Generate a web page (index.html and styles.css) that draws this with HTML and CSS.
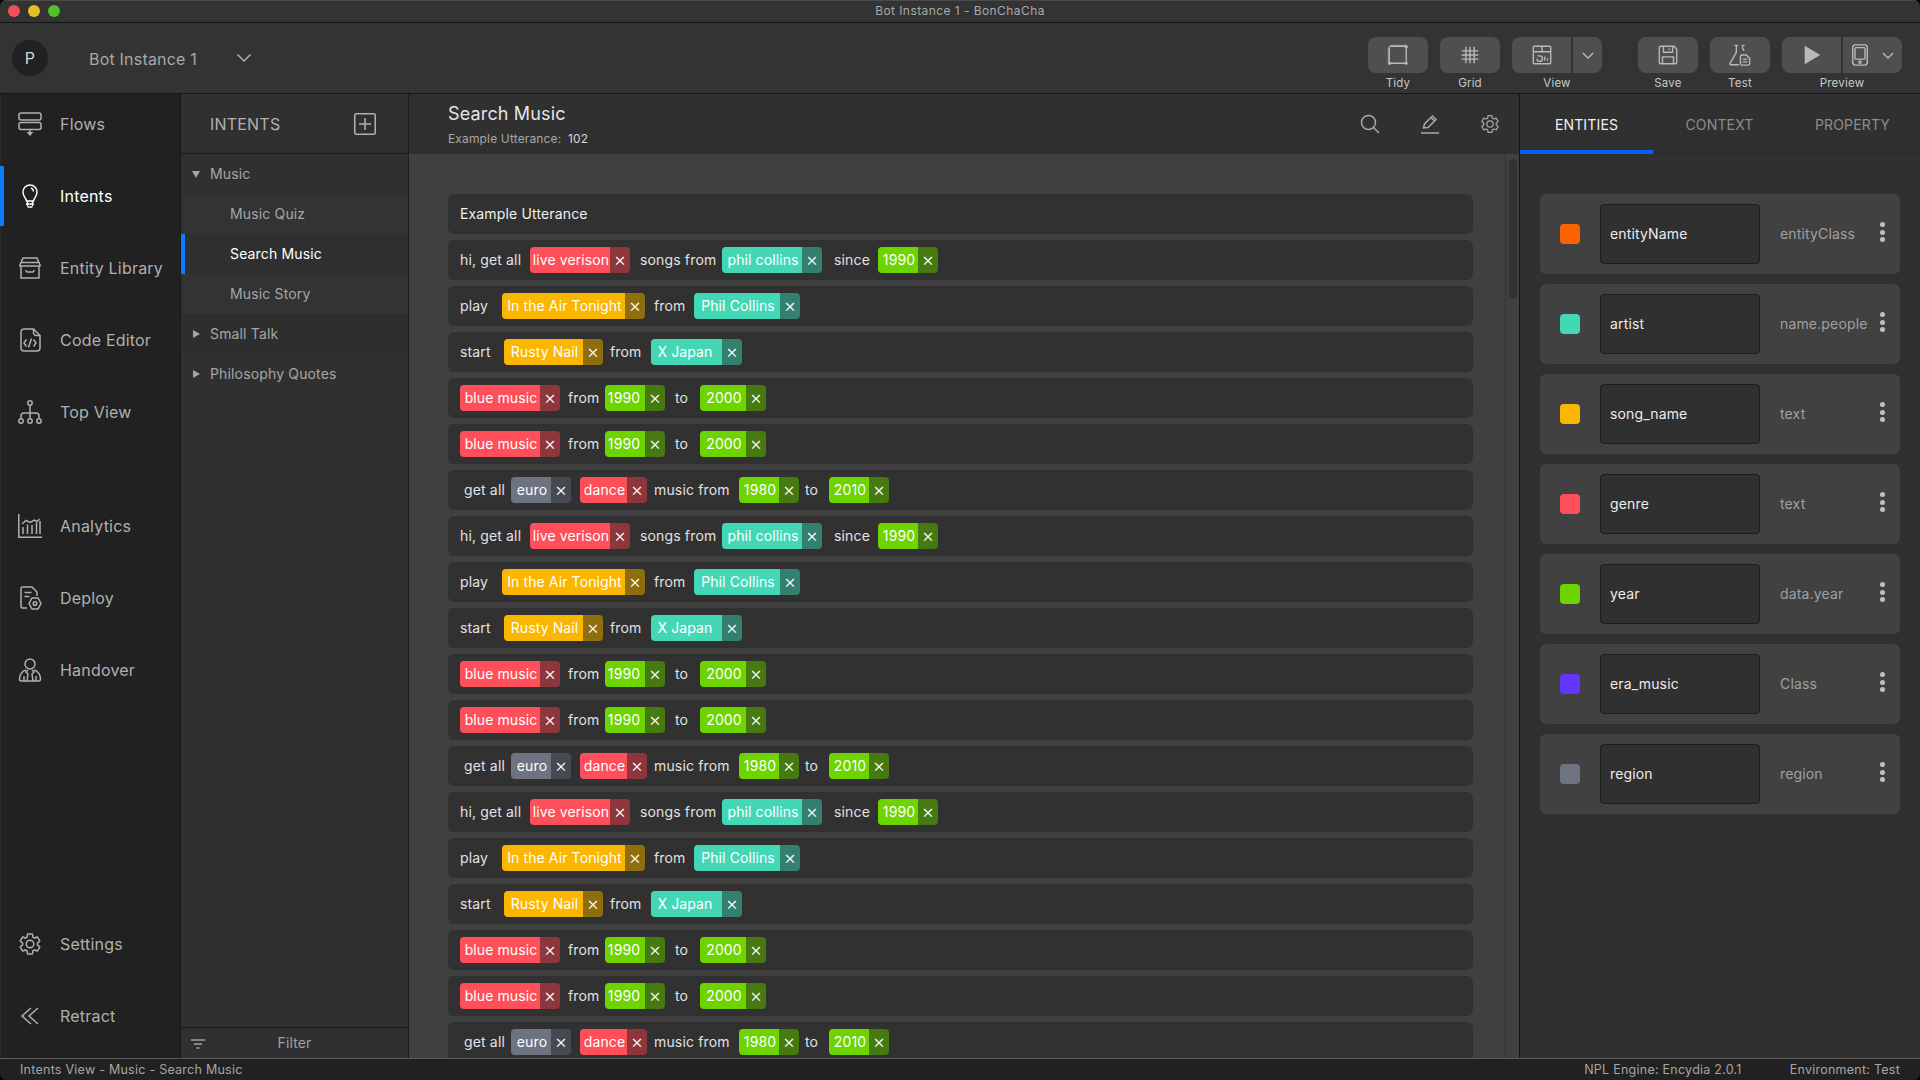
FILE: index.html
```html
<!DOCTYPE html>
<html lang="en">
<head>
  <meta charset="UTF-8">
  <title>Bot Instance 1 - BonChaCha</title>
  <link rel="stylesheet" href="styles.css">
</head>
<body>
  <div class="app">
    <div class="titlebar">
      <div class="lights"><i class="light red"></i><i class="light yellow"></i><i class="light green"></i></div>
      <span>Bot Instance 1 - BonChaCha</span>
    </div>

    <header class="toolbar">
      <div class="avatar">P</div>
      <div class="bot-name">Bot Instance 1</div>
      <svg class="bot-chevron" viewBox="0 0 16 10"><path d="M1.5 1.5 8 8l6.5-6.5"/></svg>
      <div class="tools">
        <div class="tool">
          <div class="tool-btns"><button class="btn">
            <svg class="ico" viewBox="0 0 24 24"><path d="M3 2.500h18.500M2.500 3v18.500M21 3v18.500M3 21h18"/><path d="M4 1.500h18M1.500 4v18" opacity=".5"/><circle cx="3" cy="21" r="1"/><circle cx="21" cy="21" r="1"/><circle cx="21" cy="3" r="1"/></svg>
          </button></div>
          <span class="tool-name">Tidy</span>
        </div>
        <div class="tool">
          <div class="tool-btns"><button class="btn">
            <svg class="ico" viewBox="0 0 24 24"><path d="M7.500 3v18M12 3v18M16.500 3v18M3 7.500h18M3 12h18M3 16.500h18"/></svg>
          </button></div>
          <span class="tool-name">Grid</span>
        </div>
        <div class="tool">
          <div class="tool-btns">
            <button class="btn btn-l">
              <svg class="ico" viewBox="0 0 24 24"><rect x="2.500" y="2.500" width="19" height="19" rx="1"/><path d="M2.500 8.500h19M12 2.500v6M2.500 8.500M7 13h3v0a3 3 0 1 1-3.500 3M15 13.500V18M18 15.500V18"/></svg>
            </button>
            <button class="btn btn-r">
              <svg class="chev" viewBox="0 0 14 8"><path d="M1 1l6 6 6-6"/></svg>
            </button>
          </div>
          <span class="tool-name">View</span>
        </div>
        <div class="tool tool-gap">
          <div class="tool-btns"><button class="btn">
            <svg class="ico" viewBox="0 0 24 24"><path d="M4 2.500h14.500l3 3V20a1.500 1.500 0 0 1-1.500 1.500H4A1.500 1.500 0 0 1 2.500 20V4A1.500 1.500 0 0 1 4 2.500z"/><path d="M7 2.500v6.500h10V2.500M13.500 5v1.500M6 21.500V14h12v7.500"/></svg>
          </button></div>
          <span class="tool-name">Save</span>
        </div>
        <div class="tool">
          <div class="tool-btns"><button class="btn">
            <svg class="ico" viewBox="0 0 24 24"><path d="M6 1.500h4M8 1.500v7.500L1 21.500a.8.8 0 0 0 .7 1.200H11M14 1.500h3M15 1.500c-1 2 0 4 1.500 6"/><path d="M14 12h5l3.500 3.500v6a1.500 1.500 0 0 1-1.500 1.500h-7a1.500 1.500 0 0 1-1.500-1.500V13.500A1.500 1.500 0 0 1 14 12zM15 16.500h5M15 19.500h5"/></svg>
          </button></div>
          <span class="tool-name">Test</span>
        </div>
        <div class="tool">
          <div class="tool-btns">
            <button class="btn btn-l">
              <svg class="ico" viewBox="0 0 24 24"><path class="solid" d="M4 2l17 10L4 22z"/></svg>
            </button>
            <button class="btn btn-r wide">
              <svg class="ico" viewBox="0 0 24 24"><rect x="4" y="1" width="16" height="22" rx="3"/><rect x="6.500" y="4" width="11" height="12.500" rx="1"/><circle cx="12" cy="19.700" r="1.300"/></svg>
              <svg class="chev" viewBox="0 0 14 8"><path d="M1 1l6 6 6-6"/></svg>
            </button>
          </div>
          <span class="tool-name">Preview</span>
        </div>
      </div>
    </header>

    <div class="workspace">
      <nav class="sidebar">
        <div class="nav-group">
          <a class="nav-item">
            <svg class="nav-ico" viewBox="0 0 24 24"><rect x="1" y="1" width="22" height="7" rx="2"/><rect x="1" y="10.500" width="22" height="7" rx="2"/><path d="M12 18v3"/><path class="solid" d="M8.500 20h7L12 24z"/></svg>
            Flows
          </a>
          <a class="nav-item active">
            <svg class="nav-ico" viewBox="0 0 24 24"><path d="M8.500 17c0-2.500-3.500-4-3.500-9a7 7 0 0 1 14 0c0 5-3.500 6.500-3.500 9z"/><path d="M13 4a4 4 0 0 1 2.500 3.500M8 20h8M9.500 23h5M9.500 17v5M14.500 17v5"/></svg>
            Intents
          </a>
          <a class="nav-item">
            <svg class="nav-ico" viewBox="0 0 24 24"><path d="M5 2h14l3 7v1H2V9zM2.500 6.500h19M3 10v12h18V10M8 14v.5c0 1 .7 1.500 1.500 1.500h5c.8 0 1.500-.5 1.500-1.500V14"/></svg>
            Entity Library
          </a>
          <a class="nav-item">
            <svg class="nav-ico" viewBox="0 0 24 24"><path d="M6 1h9.500L22 7.500V20a3 3 0 0 1-3 3H6a3 3 0 0 1-3-3V4a3 3 0 0 1 3-3z"/><path d="M15.500 1v3a3 3 0 0 0 3 3.500H22M8.500 11.500 6 15l2.500 3.500M15.500 11.500 18 15l-2.500 3.500M13.500 10.500l-3 9"/></svg>
            Code Editor
          </a>
          <a class="nav-item">
            <svg class="nav-ico" viewBox="0 0 24 24"><circle cx="12" cy="3" r="2.200"/><circle cx="3" cy="21" r="2.200"/><circle cx="12" cy="21" r="2.200"/><circle cx="21" cy="21" r="2.200"/><path d="M12 5.200v13.600M3 18.800V16a3 3 0 0 1 3-3h12a3 3 0 0 1 3 3v2.800"/></svg>
            Top View
          </a>
        </div>
        <div class="nav-group nav-gap">
          <a class="nav-item">
            <svg class="nav-ico" viewBox="0 0 24 24"><path d="M.800 0v23.200H24M5 20v-7M9.500 20v-9.500M14 20v-9M18.500 20v-11.500M22 20V7" /><path d="M4 10l4-3.500 4 2 4.500-2.500 2.500 1.500 2.500-2.500" /></svg>
            Analytics
          </a>
          <a class="nav-item">
            <svg class="nav-ico" viewBox="0 0 24 24"><path d="M9 22H4.500A1.500 1.500 0 0 1 3 20.500v-18A1.500 1.500 0 0 1 4.500 1H14l5 5v4M6.500 6.500h7M6.500 10.500h5"/><path d="M14 12h6l3 5.500-3 5.500h-6l-3-5.500z"/><circle cx="17" cy="17.500" r="1.800"/></svg>
            Deploy
          </a>
          <a class="nav-item">
            <svg class="nav-ico" viewBox="0 0 24 24"><circle cx="12" cy="6" r="5"/><path d="M8 12C4 13 1.500 17 1.500 21a2 2 0 0 0 2 2h17a2 2 0 0 0 2-2c0-4-2.500-8-6.500-9"/><path d="M10 12l-2 2 2 2-1 7M14 12l2 2-2 2 1 7M6 18v5M18 18v5"/></svg>
            Handover
          </a>
        </div>
        <div class="nav-group nav-bottom">
          <a class="nav-item">
            <svg class="nav-ico" viewBox="0 0 24 24"><path d="M19.430 12.980c.04-.32.07-.64.07-.98s-.03-.66-.07-.98l2.110-1.650c.19-.15.24-.42.12-.64l-2-3.460c-.12-.22-.39-.3-.61-.22l-2.490 1c-.52-.4-1.080-.73-1.690-.98l-.38-2.650C14.460 2.180 14.250 2 14 2h-4c-.25 0-.46.18-.49.42l-.38 2.650c-.61.25-1.170.59-1.690.98l-2.490-1c-.23-.09-.49 0-.61.22l-2 3.460c-.13.22-.07.49.12.64l2.110 1.650c-.04.32-.07.65-.07.98s.03.66.07.98l-2.110 1.650c-.19.15-.24.42-.12.64l2 3.460c.12.22.39.3.61.22l2.490-1c.52.4 1.080.73 1.690.98l.38 2.650c.03.24.24.42.49.42h4c.25 0 .46-.18.49-.42l.38-2.650c.61-.25 1.170-.59 1.690-.98l2.490 1c.23.09.49 0 .61-.22l2-3.460c.12-.22.07-.49-.12-.64l-2.110-1.650z"/><circle cx="12" cy="12" r="3.800"/></svg>
            Settings
          </a>
          <a class="nav-item">
            <svg class="nav-ico" viewBox="0 0 24 24"><path d="M13 4 4 12l9 8M20 4l-9 8 9 8"/></svg>
            Retract
          </a>
        </div>
      </nav>

      <aside class="intents">
        <div class="intents-head">
          <span>INTENTS</span>
          <svg class="add-ico" viewBox="0 0 22 22"><rect x=".750" y=".750" width="20.500" height="20.500" rx="1.500"/><path d="M11 5v12M5 11h12"/></svg>
        </div>
        <ul class="tree">
          <li class="tree-row"><i class="arrow down"></i>Music</li>
          <li class="tree-row child light-row">Music Quiz</li>
          <li class="tree-row child selected">Search Music</li>
          <li class="tree-row child light-row">Music Story</li>
          <li class="tree-row"><i class="arrow"></i>Small Talk</li>
          <li class="tree-row light-row"><i class="arrow"></i>Philosophy Quotes</li>
        </ul>
        <div class="filter">
          <svg class="filter-ico" viewBox="0 0 14 10"><path d="M0 1h14M3 5h8M5.500 9h3"/></svg>
          <span>Filter</span>
        </div>
      </aside>

      <main class="main">
        <div class="main-head">
          <div>
            <h1>Search Music</h1>
            <p>Example Utterance: <b>102</b></p>
          </div>
          <div class="head-icons">
            <svg viewBox="0 0 20 20"><circle cx="8.500" cy="8.500" r="7"/><path d="M13.500 13.500l5.500 5.500"/></svg>
            <svg viewBox="0 0 20 20"><path d="M3.500 14l1-4L12.500 2l3.500 3.500-8 8zM11 3.500l3.500 3.500M1 19h18"/></svg>
            <svg viewBox="0 0 24 24"><path d="M19.430 12.980c.04-.32.07-.64.07-.98s-.03-.66-.07-.98l2.110-1.650c.19-.15.24-.42.12-.64l-2-3.460c-.12-.22-.39-.3-.61-.22l-2.490 1c-.52-.4-1.080-.73-1.690-.98l-.38-2.650C14.460 2.180 14.250 2 14 2h-4c-.25 0-.46.18-.49.42l-.38 2.650c-.61.25-1.170.59-1.690.98l-2.490-1c-.23-.09-.49 0-.61.22l-2 3.460c-.13.22-.07.49.12.64l2.110 1.650c-.04.32-.07.65-.07.98s.03.66.07.98l-2.110 1.650c-.19.15-.24.42-.12.64l2 3.460c.12.22.39.3.61.22l2.490-1c.52.4 1.080.73 1.690.98l.38 2.650c.03.24.24.42.49.42h4c.25 0 .46-.18.49-.42l.38-2.650c.61-.25 1.170-.59 1.690-.98l2.490 1c.23.09.49 0 .61-.22l2-3.460c.12-.22.07-.49-.12-.64l-2.110-1.650z"/><circle cx="12" cy="12" r="3.800"/></svg>
          </div>
        </div>
        <div class="main-body">
          <div class="list">
            <div class="row row-title">Example Utterance</div>

            <div class="row hi"><span>hi, get all</span><span class="tag red w100"><b>live verison</b><i>×</i></span><span>songs from</span><span class="tag teal w100"><b>phil collins</b><i>×</i></span><span>since</span><span class="tag lime w60"><b>1990</b><i>×</i></span></div>
            <div class="row play"><span>play</span><span class="tag amber w143"><b>In the Air Tonight</b><i>×</i></span><span>from</span><span class="tag teal w106"><b>Phil Collins</b><i>×</i></span></div>
            <div class="row start"><span>start</span><span class="tag amber w99"><b>Rusty Nail</b><i>×</i></span><span>from</span><span class="tag teal w91"><b>X Japan</b><i>×</i></span></div>
            <div class="row blue"><span class="tag red w100"><b>blue music</b><i>×</i></span><span>from</span><span class="tag lime w60"><b>1990</b><i>×</i></span><span>to</span><span class="tag lime w66"><b>2000</b><i>×</i></span></div>
            <div class="row blue"><span class="tag red w100"><b>blue music</b><i>×</i></span><span>from</span><span class="tag lime w60"><b>1990</b><i>×</i></span><span>to</span><span class="tag lime w66"><b>2000</b><i>×</i></span></div>
            <div class="row euro"><span>get all</span><span class="tag gray w60"><b>euro</b><i>×</i></span><span class="tag red w67"><b>dance</b><i>×</i></span><span>music from</span><span class="tag lime w60"><b>1980</b><i>×</i></span><span>to</span><span class="tag lime w60"><b>2010</b><i>×</i></span></div>

            <div class="row hi"><span>hi, get all</span><span class="tag red w100"><b>live verison</b><i>×</i></span><span>songs from</span><span class="tag teal w100"><b>phil collins</b><i>×</i></span><span>since</span><span class="tag lime w60"><b>1990</b><i>×</i></span></div>
            <div class="row play"><span>play</span><span class="tag amber w143"><b>In the Air Tonight</b><i>×</i></span><span>from</span><span class="tag teal w106"><b>Phil Collins</b><i>×</i></span></div>
            <div class="row start"><span>start</span><span class="tag amber w99"><b>Rusty Nail</b><i>×</i></span><span>from</span><span class="tag teal w91"><b>X Japan</b><i>×</i></span></div>
            <div class="row blue"><span class="tag red w100"><b>blue music</b><i>×</i></span><span>from</span><span class="tag lime w60"><b>1990</b><i>×</i></span><span>to</span><span class="tag lime w66"><b>2000</b><i>×</i></span></div>
            <div class="row blue"><span class="tag red w100"><b>blue music</b><i>×</i></span><span>from</span><span class="tag lime w60"><b>1990</b><i>×</i></span><span>to</span><span class="tag lime w66"><b>2000</b><i>×</i></span></div>
            <div class="row euro"><span>get all</span><span class="tag gray w60"><b>euro</b><i>×</i></span><span class="tag red w67"><b>dance</b><i>×</i></span><span>music from</span><span class="tag lime w60"><b>1980</b><i>×</i></span><span>to</span><span class="tag lime w60"><b>2010</b><i>×</i></span></div>

            <div class="row hi"><span>hi, get all</span><span class="tag red w100"><b>live verison</b><i>×</i></span><span>songs from</span><span class="tag teal w100"><b>phil collins</b><i>×</i></span><span>since</span><span class="tag lime w60"><b>1990</b><i>×</i></span></div>
            <div class="row play"><span>play</span><span class="tag amber w143"><b>In the Air Tonight</b><i>×</i></span><span>from</span><span class="tag teal w106"><b>Phil Collins</b><i>×</i></span></div>
            <div class="row start"><span>start</span><span class="tag amber w99"><b>Rusty Nail</b><i>×</i></span><span>from</span><span class="tag teal w91"><b>X Japan</b><i>×</i></span></div>
            <div class="row blue"><span class="tag red w100"><b>blue music</b><i>×</i></span><span>from</span><span class="tag lime w60"><b>1990</b><i>×</i></span><span>to</span><span class="tag lime w66"><b>2000</b><i>×</i></span></div>
            <div class="row blue"><span class="tag red w100"><b>blue music</b><i>×</i></span><span>from</span><span class="tag lime w60"><b>1990</b><i>×</i></span><span>to</span><span class="tag lime w66"><b>2000</b><i>×</i></span></div>
            <div class="row euro"><span>get all</span><span class="tag gray w60"><b>euro</b><i>×</i></span><span class="tag red w67"><b>dance</b><i>×</i></span><span>music from</span><span class="tag lime w60"><b>1980</b><i>×</i></span><span>to</span><span class="tag lime w60"><b>2010</b><i>×</i></span></div>
          </div>
          <div class="scroll"><div class="thumb"></div></div>
        </div>
      </main>

      <section class="panel">
        <div class="tabs">
          <div class="tab on">ENTITIES</div>
          <div class="tab">CONTEXT</div>
          <div class="tab">PROPERTY</div>
        </div>
        <div class="entities">
          <div class="entity"><i class="swatch c-orange"></i><div class="entity-name">entityName</div><span class="entity-class">entityClass</span><div class="dots"><i></i><i></i><i></i></div></div>
          <div class="entity"><i class="swatch c-teal"></i><div class="entity-name">artist</div><span class="entity-class">name.people</span><div class="dots"><i></i><i></i><i></i></div></div>
          <div class="entity"><i class="swatch c-amber"></i><div class="entity-name">song_name</div><span class="entity-class">text</span><div class="dots"><i></i><i></i><i></i></div></div>
          <div class="entity"><i class="swatch c-red"></i><div class="entity-name">genre</div><span class="entity-class">text</span><div class="dots"><i></i><i></i><i></i></div></div>
          <div class="entity"><i class="swatch c-lime"></i><div class="entity-name">year</div><span class="entity-class">data.year</span><div class="dots"><i></i><i></i><i></i></div></div>
          <div class="entity"><i class="swatch c-purple"></i><div class="entity-name">era_music</div><span class="entity-class">Class</span><div class="dots"><i></i><i></i><i></i></div></div>
          <div class="entity"><i class="swatch c-gray"></i><div class="entity-name">region</div><span class="entity-class">region</span><div class="dots"><i></i><i></i><i></i></div></div>
        </div>
      </section>
    </div>

    <footer class="statusbar">
      <span>Intents View - Music - Search Music</span>
      <span class="status-right"><span>NPL Engine: Encydia 2.0.1</span><span>Environment: Test</span></span>
    </footer>
  </div>
</body>
</html>
```

FILE: styles.css
```css
* {
  box-sizing: border-box;
}

body {
  margin: 0;
  background: #000;
  font-family: Inter, "Noto Sans", sans-serif;
  font-size: 14px;
  letter-spacing: 0.15px;
  color: #b0b0b0;
  overflow: hidden;
}

svg {
  display: block;
  fill: none;
  stroke: currentColor;
  stroke-width: 1.5;
}

svg .solid {
  fill: currentColor;
  stroke: none;
}

.app {
  width: 1920px;
  height: 1080px;
  display: flex;
  flex-direction: column;
  border-radius: 6px;
  overflow: hidden;
}

/* title bar */
.titlebar {
  position: relative;
  height: 23px;
  flex: none;
  background: #333;
  border-top: 1px solid #4a4a4a;
  border-bottom: 1px solid #141414;
  display: flex;
  align-items: center;
  justify-content: center;
  padding-bottom: 2px;
  font-size: 12px;
  letter-spacing: 0.43px;
  color: #a9a9a9;
}

.lights {
  position: absolute;
  left: 8px;
  top: 4px;
  display: flex;
  gap: 8px;
}

.light {
  width: 12px;
  height: 12px;
  border-radius: 50%;
}

.light.red { background: #f25056; }
.light.yellow { background: #e5bf28; }
.light.green { background: #4fc12e; }

/* toolbar */
.toolbar {
  height: 71px;
  flex: none;
  background: #333;
  border-bottom: 1px solid #161616;
  display: flex;
  align-items: center;
  padding: 0 18px 0 12px;
}

.avatar {
  width: 36px;
  height: 36px;
  border-radius: 50%;
  background: #212121;
  color: #d6d6d6;
  font-size: 16px;
  display: flex;
  align-items: center;
  justify-content: center;
}

.bot-name {
  margin-left: 41px;
  padding-top: 2px;
  font-size: 16px;
  letter-spacing: 0.2px;
  color: #a8a8a8;
}

.bot-chevron {
  width: 16px;
  height: 10px;
  margin-left: 39px;
  color: #b0b0b0;
}

.tools {
  margin-left: auto;
  align-self: flex-start;
  padding-top: 14px;
  display: flex;
  gap: 12px;
}

.tool {
  display: flex;
  flex-direction: column;
  align-items: center;
}

.tool-gap {
  margin-left: 24px;
}

.tool-btns {
  display: flex;
  gap: 2px;
}

.btn {
  width: 60px;
  height: 36px;
  border: 0;
  padding: 0;
  border-radius: 8px;
  background: #4f4f4f;
  color: #b9b9b9;
  display: flex;
  align-items: center;
  justify-content: center;
}

.btn-l {
  width: 59px;
  border-radius: 8px 0 0 8px;
}

.btn-r {
  width: 29px;
  border-radius: 0 8px 8px 0;
}

.btn-r.wide {
  width: 59px;
  gap: 11px;
  padding-right: 3px;
}

.ico {
  width: 22px;
  height: 22px;
}

.chev {
  width: 12px;
  height: 7px;
}

.tool-name {
  margin-top: 3px;
  font-size: 11.5px;
  line-height: 14px;
  letter-spacing: 0.2px;
  color: #c8c8c8;
}

/* main area */
.workspace {
  flex: 1;
  min-height: 0;
  display: flex;
}

.sidebar {
  width: 181px;
  flex: none;
  background: #212121;
  border-left: 1px solid #2e2e2e;
  border-right: 1px solid #181818;
  display: flex;
  flex-direction: column;
  padding-bottom: 12px;
}

.nav-group {
  display: flex;
  flex-direction: column;
  gap: 12px;
}

.nav-gap {
  margin-top: 54px;
}

.nav-bottom {
  margin-top: auto;
}

.nav-item {
  height: 60px;
  display: flex;
  align-items: center;
  gap: 18px;
  padding-left: 17px;
  font-size: 16px;
  letter-spacing: 0.2px;
  color: #b0b0b0;
}

.nav-item.active {
  color: #fff;
  box-shadow: inset 4px 0 0 #0a7cff;
  margin-left: -1px;
  padding-left: 18px;
}

.nav-ico {
  width: 24px;
  height: 24px;
  flex: none;
}

.intents {
  width: 228px;
  flex: none;
  background: #303030;
  border-right: 1px solid #1c1c1c;
  display: flex;
  flex-direction: column;
}

.intents-head {
  height: 60px;
  flex: none;
  border-bottom: 1px solid #1c1c1c;
  display: flex;
  align-items: center;
  justify-content: space-between;
  padding: 0 32px 0 29px;
  font-size: 16px;
  letter-spacing: 0.2px;
  color: #b0b0b0;
}

.add-ico {
  width: 22px;
  height: 22px;
}

.tree {
  list-style: none;
  margin: 0;
  padding: 0;
  flex: 1;
}

.tree-row {
  position: relative;
  height: 40px;
  display: flex;
  align-items: center;
  padding-left: 29px;
  padding-bottom: 2px;
  color: #a6a6a6;
}

.tree-row.child {
  padding-left: 49px;
}

.tree-row.light-row {
  background: #333;
}

.tree-row.selected {
  color: #fff;
  background: #2f2f2f;
  box-shadow: inset 4px 0 0 #0a7cff;
}

.tree-row:nth-child(5) {
  background: #2e2e2e;
}

.tree-row:nth-child(6) {
  background: transparent;
}

.arrow {
  position: absolute;
  left: 12px;
  top: 16px;
  width: 0;
  height: 0;
  border-style: solid;
  border-width: 4px 0 4px 7px;
  border-color: transparent transparent transparent #a6a6a6;
}

.arrow.down {
  left: 11px;
  top: 17px;
  border-width: 7px 4px 0 4px;
  border-color: #a6a6a6 transparent transparent transparent;
}

.filter {
  height: 31px;
  flex: none;
  border-top: 1px solid #1c1c1c;
  display: flex;
  align-items: center;
  justify-content: center;
  position: relative;
  padding-bottom: 1px;
  color: #a0a0a0;
}

.filter-ico {
  position: absolute;
  left: 10px;
  top: 11px;
  width: 14px;
  height: 10px;
}

.main {
  flex: 1;
  min-width: 0;
  border-right: 1px solid #141414;
  display: flex;
  flex-direction: column;
}

.main-head {
  height: 60px;
  flex: none;
  background: #303030;
  display: flex;
  align-items: center;
  justify-content: space-between;
  padding: 0 19px 0 39px;
}

.main-head h1 {
  margin: 0;
  font-size: 18px;
  font-weight: 400;
  line-height: 24px;
  color: #e6e6e6;
}

.main-head p {
  margin: 5px 0 0;
  font-size: 12px;
  line-height: 16px;
  color: #a6a6a6;
}

.main-head b {
  font-weight: 400;
  color: #d6d6d6;
  margin-left: 3px;
}

.head-icons {
  display: flex;
  gap: 40px;
  color: #a8a8a8;
}

.head-icons svg {
  width: 20px;
  height: 20px;
}

.main-body {
  flex: 1;
  min-height: 0;
  background: #404040;
  display: flex;
}

.list {
  flex: 1;
  min-width: 0;
  padding: 40px 32px 0 39px;
  overflow: hidden;
}

.row {
  height: 40px;
  margin-bottom: 6px;
  border-radius: 6px;
  background: #313131;
  padding-left: 12px;
  color: #e2e2e2;
  display: grid;
  align-items: center;
}

.row > span:not(.tag) {
  padding-bottom: 2px;
}

.row-title {
  display: flex;
  padding-bottom: 2px;
  color: #f0f0f0;
}

.hi { grid-template-columns: 70px 110px 82px 112px 44px 60px; }
.play { grid-template-columns: 42px 152px 40px 106px; }
.start { grid-template-columns: 44px 106px 41px 91px; }
.blue { grid-template-columns: 108px 37px 70px 25px 66px; }
.euro {
  padding-left: 16px;
  grid-template-columns: 47px 69px 74px 85px 66px 24px 60px;
}

.tag {
  height: 26px;
  display: flex;
  border-radius: 4px;
  overflow: hidden;
  color: #fff;
  letter-spacing: 0.1px;
}

.tag b {
  flex: 1;
  padding-left: 2px;
  font-weight: 400;
  line-height: 26px;
  text-align: center;
  white-space: nowrap;
  background: var(--tag);
}

.tag i {
  flex: none;
  width: 20px;
  font-style: normal;
  font-weight: 300;
  font-size: 19px;
  line-height: 25px;
  text-align: center;
  letter-spacing: 0;
  background: var(--tag-dark);
}

.w91 b {
  padding-left: 0;
  padding-right: 3px;
}

.blue .w60 b {
  padding-left: 0;
  padding-right: 2px;
}

.red { --tag: #ff4f5a; --tag-dark: #8d373d; }
.teal { --tag: #44d7b6; --tag-dark: #33806e; }
.amber { --tag: #fab600; --tag-dark: #8e6e0f; }
.lime { --tag: #6dd400; --tag-dark: #467a10; }
.gray { --tag: #6d7380; --tag-dark: #454950; }

.w60 { width: 60px; }
.w66 { width: 66px; }
.w67 { width: 67px; }
.w91 { width: 91px; }
.w99 { width: 99px; }
.w100 { width: 100px; }
.w106 { width: 106px; }
.w143 { width: 143px; }

.scroll {
  width: 14px;
  flex: none;
  border-left: 1px solid #353535;
  padding: 5px 3px 0;
}

.thumb {
  width: 8px;
  height: 140px;
  border-radius: 4px;
  background: #333;
}

.panel {
  width: 400px;
  flex: none;
  background: #303030;
  display: flex;
  flex-direction: column;
}

.tabs {
  height: 60px;
  flex: none;
  display: flex;
  border-bottom: 1px solid #262626;
}

.tab {
  width: 133px;
  display: flex;
  align-items: center;
  justify-content: center;
  color: #8c8c8c;
  border-bottom: 4px solid transparent;
  margin-bottom: -1px;
  padding-top: 4px;
}

.tab.on {
  color: #f0f0f0;
  border-bottom-color: #0a5fff;
}

.entities {
  padding: 40px 20px 0;
  display: flex;
  flex-direction: column;
  gap: 10px;
}

.entity {
  height: 80px;
  border-radius: 6px;
  background: #414141;
  display: flex;
  align-items: center;
  padding-left: 20px;
  position: relative;
}

.swatch {
  width: 20px;
  height: 20px;
  border-radius: 4px;
}

.c-orange { background: #fa6400; }
.c-teal { background: #44d7b6; }
.c-amber { background: #fab600; }
.c-red { background: #ff4f5a; }
.c-lime { background: #6dd400; }
.c-purple { background: #6236ff; }
.c-gray { background: #6d7380; }

.entity-name {
  width: 160px;
  height: 60px;
  margin-left: 20px;
  padding: 0 0 2px 9px;
  border: 1px solid #1c1c1c;
  border-radius: 4px;
  background: #303030;
  color: #ececec;
  display: flex;
  align-items: center;
}

.entity-class {
  margin-left: 20px;
  padding-bottom: 2px;
  color: #a0a0a0;
}

.dots {
  position: absolute;
  left: 340px;
  top: 28px;
  display: flex;
  flex-direction: column;
  gap: 2.500px;
}

.dots i {
  width: 5px;
  height: 5px;
  border-radius: 50%;
  background: #c0c0c0;
}

/* status bar */
.statusbar {
  height: 22px;
  flex: none;
  background: #212121;
  border-top: 1px solid #5a5a5a;
  display: flex;
  align-items: center;
  justify-content: space-between;
  padding: 0 20px;
  font-size: 12.5px;
  letter-spacing: 0.25px;
  color: #a6a6a6;
}

.status-right {
  display: flex;
  gap: 48px;
}
```
